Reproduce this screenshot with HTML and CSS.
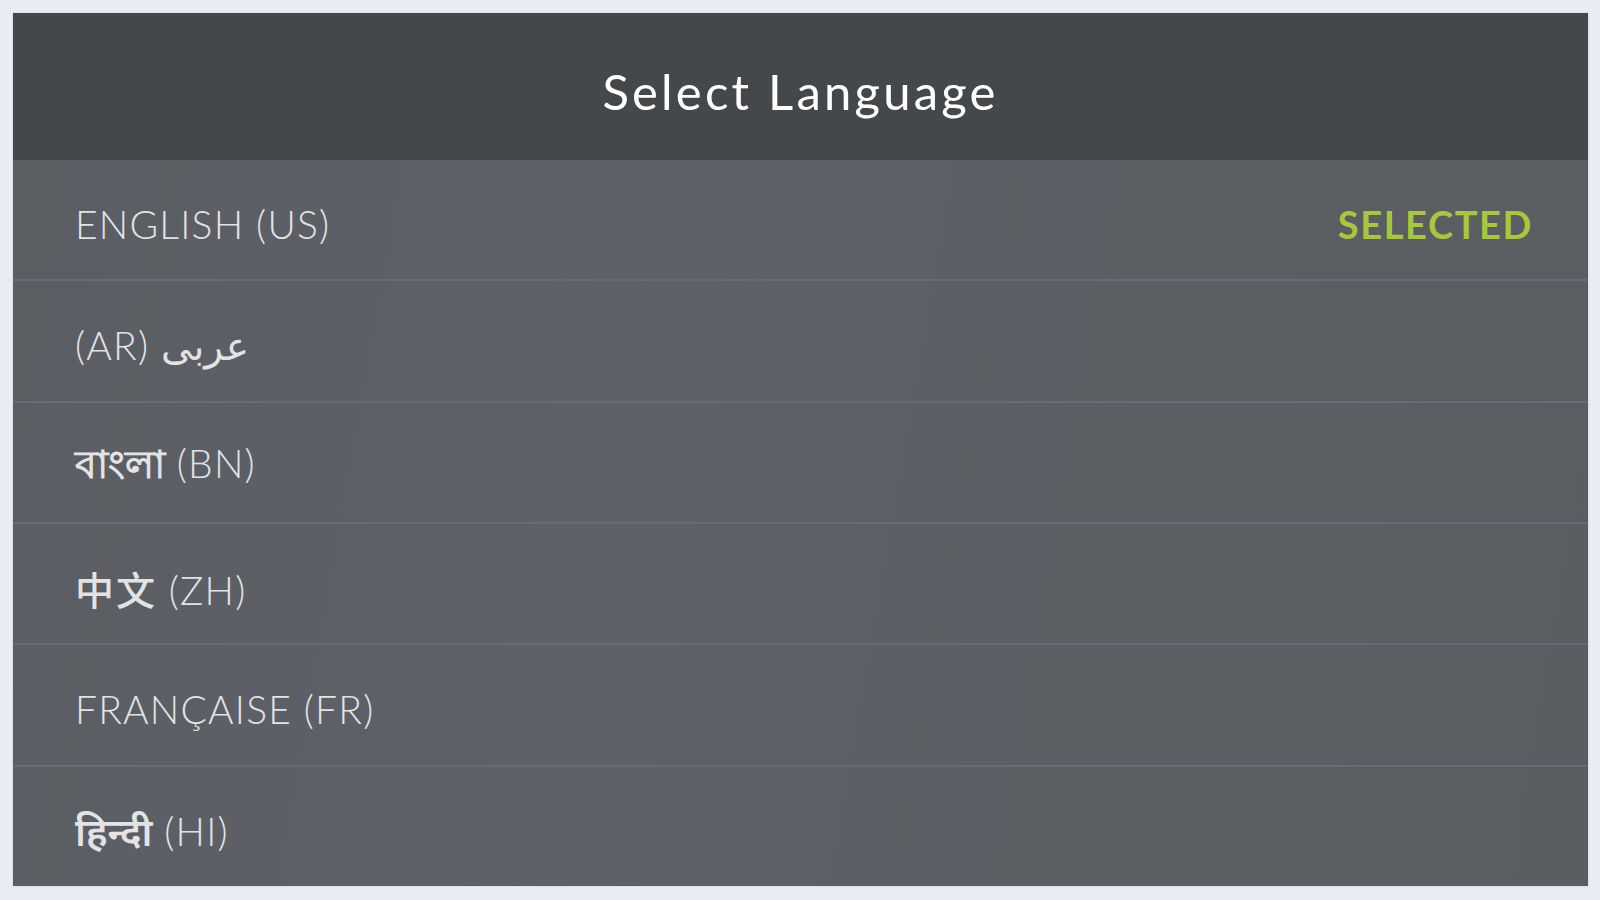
FILE: index.html
```html
<!DOCTYPE html>
<html lang="en">
<head>
<meta charset="utf-8">
<title>Select Language</title>
<link rel="stylesheet" href="styles.css">
</head>
<body>
<div class="page">
  <section class="panel">
    <header class="panel-header">
      <h1 class="title">Select Language</h1>
    </header>
    <ul class="lang-list">
      <li class="lang-row"><span class="lang-name">ENGLISH (US)</span><span class="selected">SELECTED</span></li>
      <li class="lang-row"><span class="lang-name">(AR) <span class="ar">عربى</span></span></li>
      <li class="lang-row"><span class="lang-name"><span class="bn">বাংলা</span> (BN)</span></li>
      <li class="lang-row"><span class="lang-name"><span class="zh">中文</span> (ZH)</span></li>
      <li class="lang-row"><span class="lang-name">FRANÇAISE (FR)</span></li>
      <li class="lang-row last"><span class="lang-name"><span class="hi">हिन्दी</span> (HI)</span></li>
    </ul>
  </section>
</div>
</body>
</html>
```
FILE: styles.css
```css
html, body {
  margin: 0;
  padding: 0;
  height: 100%;
}
body {
  background: #e8edf4;
  font-family: "Lato", "Noto Sans", sans-serif;
}
.page {
  padding: 13px 12px 14px 13px;
  height: 900px;
  box-sizing: border-box;
}
.panel {
  height: 873px;
  display: flex;
  flex-direction: column;
  background: linear-gradient(100deg, #5a5d62 0%, #5e6168 40%, #5b5e63 70%, #5a5d62 100%);
  box-shadow: 0 0 1px rgba(0,0,0,0.3);
}
.panel-header {
  height: 147px;
  flex: none;
  background: #45484b;
  display: flex;
  align-items: center;
  justify-content: center;
}
.title {
  margin: 0;
  color: #ffffff;
  font-family: "Lato", sans-serif;
  font-weight: 400;
  font-size: 49px;
  letter-spacing: 3.2px;
  padding-top: 8px;
}
.lang-list {
  list-style: none;
  margin: 0;
  padding: 0;
  flex: 1;
  display: flex;
  flex-direction: column;
}
.lang-row {
  flex: 1;
  display: flex;
  align-items: center;
  justify-content: space-between;
  padding: 8px 55px 0 62px;
  border-bottom: 2px solid #686b71;
  color: #e2e3e5;
  font-size: 39px;
  font-weight: 300;
  letter-spacing: 1.2px;
}
.lang-row.last {
  border-bottom: none;
}
.lang-name {
  white-space: nowrap;
}
.ar {
  font-family: "Noto Sans", "DejaVu Sans", sans-serif;
  font-weight: 400;
  letter-spacing: 0;
}
.bn, .hi {
  font-family: "Noto Sans", "DejaVu Sans", sans-serif;
  font-weight: 600;
  letter-spacing: 0;
}
.zh {
  font-family: "Noto Sans CJK SC", sans-serif;
  font-weight: 500;
  letter-spacing: 2px;
}
.selected {
  color: #a9c73c;
  font-weight: 700;
  font-size: 38px;
  letter-spacing: 1.6px;
}
```
